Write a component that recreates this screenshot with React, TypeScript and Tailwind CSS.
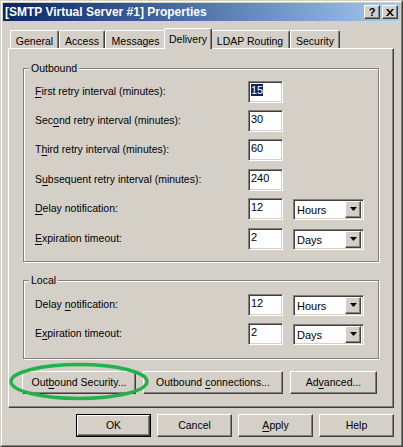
import React from "react";

const raised =
  "border border-t-white border-l-white border-r-[#404040] border-b-[#404040] shadow-[inset_-1px_-1px_0_#808080]";
const sunken =
  "border border-t-[#808080] border-l-[#808080] border-r-white border-b-white shadow-[inset_1px_1px_0_#404040,inset_-1px_-1px_0_#d4d0c8]";

const U = ({ children }: { children: React.ReactNode }) => (
  <span className="underline underline-offset-[2px] decoration-1">{children}</span>
);

const Field = ({ value, selected }: { value: string; selected?: boolean }) => (
  <div className={`w-[35px] h-[22px] bg-white ${sunken} pl-[2px] pt-[2px] text-[11px] leading-[13px]`}>
    {selected ? <span className="bg-[#0a246a] text-white">{value}</span> : value}
  </div>
);

const Select = ({ value }: { value: string }) => (
  <div className={`ml-[10px] w-[71px] h-[21px] bg-white ${sunken} flex items-center justify-between p-[2px]`}>
    <span className="pl-px pt-[2px] text-[11px] leading-[13px]">{value}</span>
    <div className={`w-[16px] h-[17px] bg-[#d4d0c8] ${raised} flex items-center justify-center`}>
      <svg width="7" height="4" viewBox="0 0 7 4">
        <path d="M0 0h7L3.5 4z" fill="#000" />
      </svg>
    </div>
  </div>
);

const Row = ({
  label,
  value,
  unit,
  selected,
  className = "",
}: {
  label: React.ReactNode;
  value: string;
  unit?: string;
  selected?: boolean;
  className?: string;
}) => (
  <div className={`flex items-center ${className}`}>
    <div className="w-[213px]">{label}</div>
    <Field value={value} selected={selected} />
    {unit && <Select value={unit} />}
  </div>
);

const Group = ({
  title,
  children,
  className = "",
}: {
  title: string;
  children: React.ReactNode;
  className?: string;
}) => (
  <fieldset
    className={`w-[356px] border border-[#808080] shadow-[inset_1px_1px_0_#fff,1px_1px_0_#fff] pl-[11px] ${className}`}
  >
    <legend className="-ml-[6px] px-[2px] leading-[12px] bg-[#d4d0c8]">{title}</legend>
    {children}
  </fieldset>
);

const Button = ({
  children,
  w,
  def,
}: {
  children: React.ReactNode;
  w: string;
  def?: boolean;
}) =>
  def ? (
    <div className={`${w} h-[23px] border border-black`}>
      <div className={`h-full ${raised} flex items-center justify-center`}>{children}</div>
    </div>
  ) : (
    <div className={`${w} h-[23px] ${raised} flex items-center justify-center`}>{children}</div>
  );

const tabs = [
  { name: "General", w: "w-[49px]" },
  { name: "Access", w: "w-[46px]" },
  { name: "Messages", w: "w-[61px]" },
  { name: "Delivery", w: "w-[48px]", active: true },
  { name: "LDAP Routing", w: "w-[80px]" },
  { name: "Security", w: "w-[50px]" },
];

export default function App() {
  return (
    <div className="relative w-[403px] h-[447px] bg-[#d4d0c8] text-black text-[10.5px] font-['Liberation_Sans',Arial,sans-serif] border border-t-[#d4d0c8] border-l-[#d4d0c8] border-r-[#404040] border-b-[#404040]">
      <div className="h-full border border-t-white border-l-white border-r-[#808080] border-b-[#808080] p-px flex flex-col">
        {/* title bar */}
        <div className="h-[18px] flex items-center justify-between bg-linear-to-r from-[#0a246a] to-[#a6caf0] pl-[2px] pr-[2px]">
          <span className="text-white font-bold text-[12px] leading-none">
            [SMTP Virtual Server #1] Properties
          </span>
          <div className="flex gap-[2px]">
            <div className={`w-[16px] h-[14px] bg-[#d4d0c8] ${raised} flex items-center justify-center font-bold text-[11px] leading-none`}>
              ?
            </div>
            <div className={`w-[16px] h-[14px] bg-[#d4d0c8] ${raised} flex items-center justify-center`}>
              <svg width="8" height="7" viewBox="0 0 8 7">
                <path d="M0 0h2l2 2.5L6 0h2L5 3.5 8 7H6L4 4.5 2 7H0l3-3.5z" fill="#000" />
              </svg>
            </div>
          </div>
        </div>

        {/* tabs */}
        <div className="mt-[7px] ml-[7px] h-[20px] flex items-end">
          {tabs.map((t) =>
            t.active ? (
              <div
                key={t.name}
                className={`${t.w} -mx-[2px] -mb-px h-[21px] relative z-10 bg-[#d4d0c8] border-t border-l border-r border-t-white border-l-white border-r-[#404040] shadow-[inset_-1px_0_0_#808080] rounded-t-[2px] flex justify-center pt-[3px]`}
              >
                {t.name}
              </div>
            ) : (
              <div
                key={t.name}
                className={`${t.w} h-[18px] border-t border-l border-r border-t-white border-l-white border-r-[#404040] shadow-[inset_-1px_0_0_#808080] rounded-t-[2px] flex justify-center pt-[3px]`}
              >
                {t.name}
              </div>
            )
          )}
        </div>

        {/* panel */}
        <div className={`ml-[5px] w-[386px] h-[360px] ${raised} pt-[13px] pl-[14px]`}>
          <Group title="Outbound" className="pb-[11px]">
            <div className="mt-[7px] flex flex-col">
              <Row label={<><U>F</U>irst retry interval (minutes):</>} value="15" selected />
              <Row className="mt-[7px]" label={<>Sec<U>o</U>nd retry interval (minutes):</>} value="30" />
              <Row className="mt-[7px]" label={<>T<U>h</U>ird retry interval (minutes):</>} value="60" />
              <Row className="mt-[8px]" label={<>S<U>u</U>bsequent retry interval (minutes):</>} value="240" />
              <Row className="mt-[7px]" label={<><U>D</U>elay notification:</>} value="12" unit="Hours" />
              <Row className="mt-[8px]" label={<><U>E</U>xpiration timeout:</>} value="2" unit="Days" />
            </div>
          </Group>

          <Group title="Local" className="mt-[12px] pb-[13px]">
            <div className="mt-[8px] flex flex-col">
              <Row label={<>Delay <U>n</U>otification:</>} value="12" unit="Hours" />
              <Row className="mt-[7px]" label={<>E<U>x</U>piration timeout:</>} value="2" unit="Days" />
            </div>
          </Group>

          <div className="mt-[12px] -ml-px flex gap-[7px]">
            <Button w="w-[114px]">
              <span>Out<U>b</U>ound Security...</span>
            </Button>
            <Button w="w-[140px]">
              <span>Outbound <U>c</U>onnections...</span>
            </Button>
            <Button w="w-[87px]">
              <span>Ad<U>v</U>anced...</span>
            </Button>
          </div>
        </div>

        {/* dialog buttons */}
        <div className="mt-[6px] pr-[6px] flex justify-end gap-[6px]">
          <Button w="w-[75px]" def>
            OK
          </Button>
          <Button w="w-[75px]">Cancel</Button>
          <Button w="w-[75px]">
            <span><U>A</U>pply</span>
          </Button>
          <Button w="w-[75px]">Help</Button>
        </div>
      </div>

      {/* annotation */}
      <svg className="absolute left-[7px] top-[360px]" width="143" height="41" viewBox="0 0 143 41">
        <ellipse cx="71" cy="20.5" rx="68" ry="17" fill="none" stroke="#22b14c" strokeWidth="3.5" />
      </svg>
    </div>
  );
}
